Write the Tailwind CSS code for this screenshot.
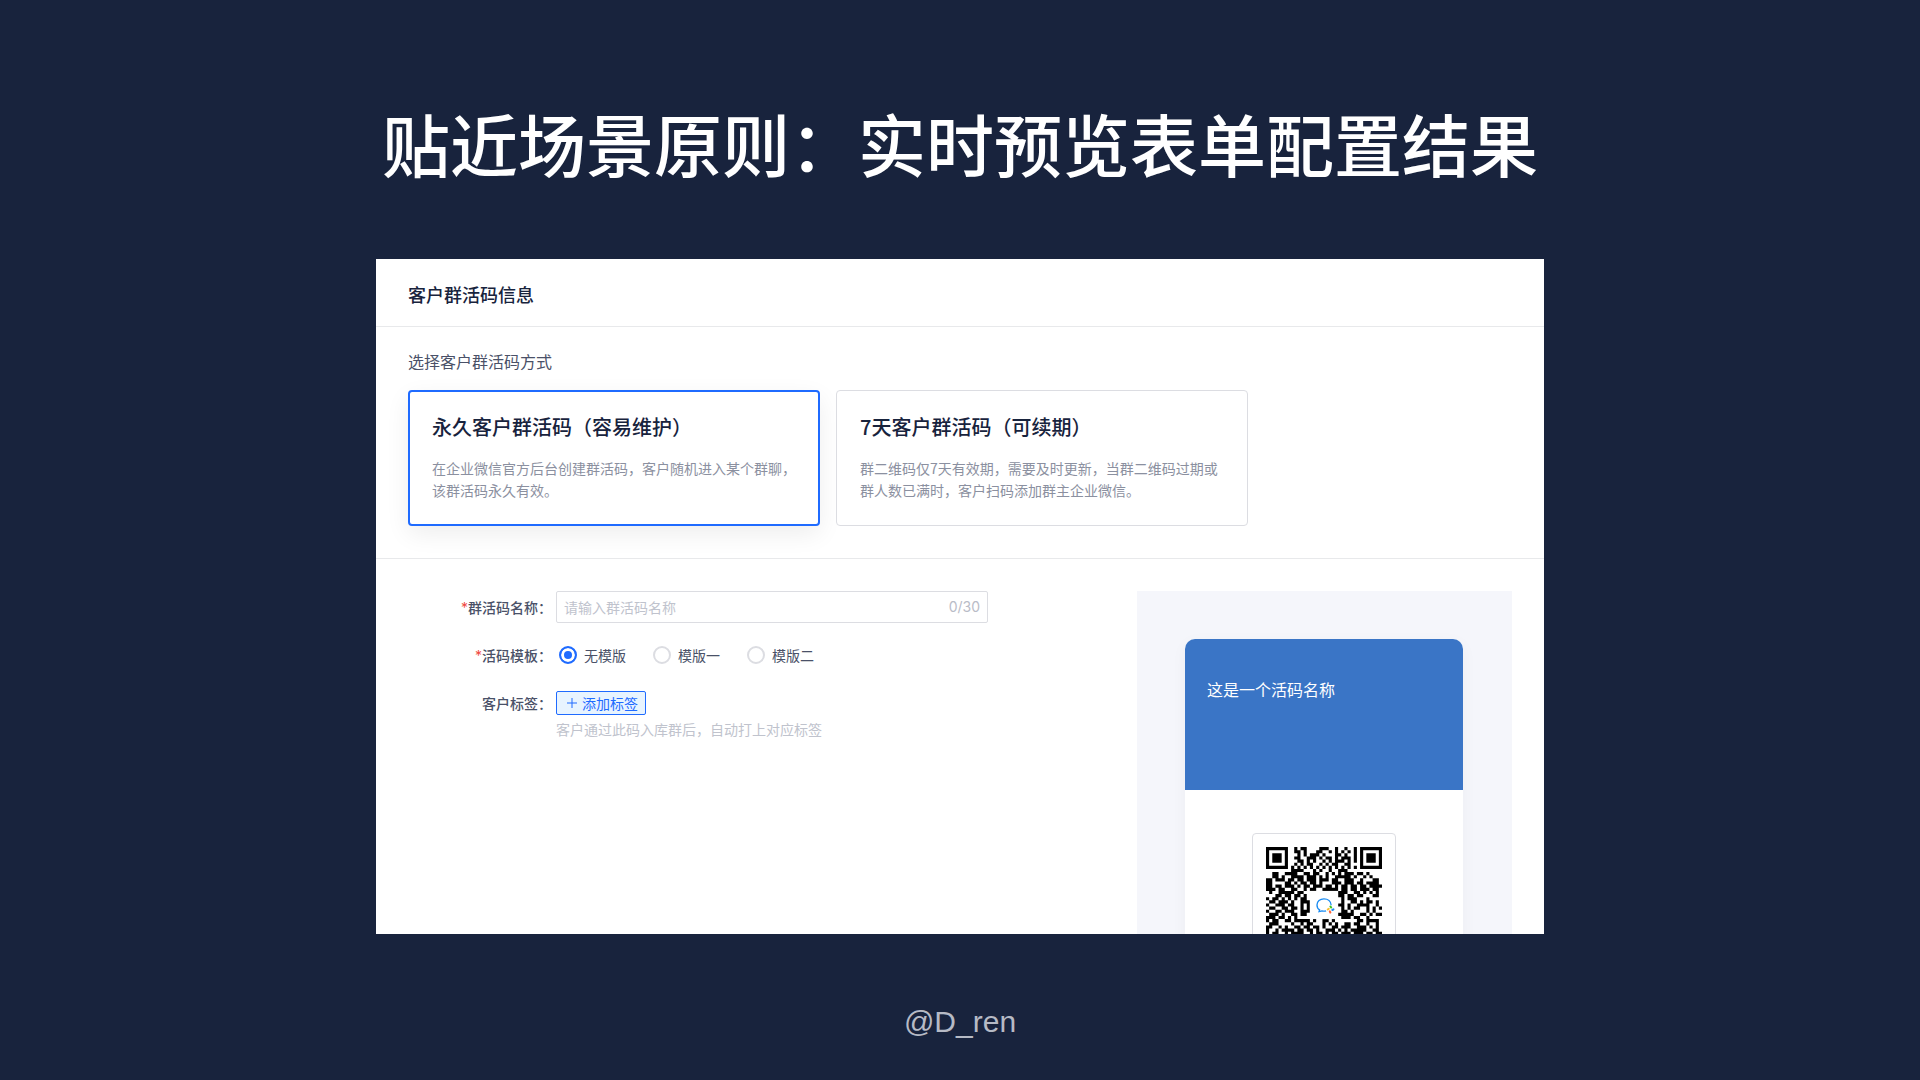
<!DOCTYPE html>
<html lang="zh-CN">
<head>
<meta charset="utf-8">
<meta name="viewport" content="width=device-width, initial-scale=1">
<title>实时预览表单配置结果</title>
<script src="https://cdn.jsdelivr.net/npm/@tailwindcss/browser@4"></script>
</head>
<body class="min-h-screen bg-[#18233d] font-['Noto_Sans_CJK_SC',sans-serif] text-[#4a5168]">
<div class="flex min-h-screen flex-col items-center px-6 pt-[93px]">
  <h1 class="text-center text-[68px] leading-[100px] font-medium text-white">贴近场景原则：实时预览表单配置结果</h1>

  <main class="mt-[66px] h-[675px] w-full max-w-[1168px] overflow-hidden bg-white">
    <header class="border-b border-[#e8e9eb] px-8 pt-[22px] pb-[18px]">
      <h2 class="text-lg leading-[27px] font-medium text-[#18233d]">客户群活码信息</h2>
    </header>

    <section class="border-b border-[#e8e9eb] px-8 pt-[22px] pb-8">
      <h3 class="text-base leading-6">选择客户群活码方式</h3>
      <div class="mt-[17px] flex gap-4">
        <button type="button" class="flex h-[136px] w-[412px] flex-col rounded border-2 border-[#1f6bff] bg-white px-[22px] pt-[19px] text-left shadow-[0_8px_24px_rgba(0,0,0,0.07)]">
          <span class="text-xl leading-8 font-medium text-[#18233d]">永久客户群活码（容易维护）</span>
          <span class="mt-3.5 text-sm leading-[22px] text-[#8b90a0]">在企业微信官方后台创建群活码，客户随机进入某个群聊，该群活码永久有效。</span>
        </button>
        <button type="button" class="flex h-[136px] w-[412px] flex-col rounded border border-[#dcdde2] bg-white px-[23px] pt-5 text-left">
          <span class="text-xl leading-8 font-medium text-[#18233d]">7天客户群活码（可续期）</span>
          <span class="mt-3.5 text-sm leading-[22px] text-[#8b90a0]">群二维码仅7天有效期，需要及时更新，当群二维码过期或群人数已满时，客户扫码添加群主企业微信。</span>
        </button>
      </div>
    </section>

    <div class="flex items-start justify-between px-8 pt-8">
      <form class="flex flex-col gap-4 text-sm">
        <div class="flex items-center">
          <label for="code-name" class="w-36 text-right font-medium"><span class="font-['Inter'] font-normal text-[#f0483e]">*</span>群活码名称：</label>
          <div class="ml-1 flex h-8 w-[432px] items-center rounded-xs border border-[#dcdde2] px-[7px]">
            <input id="code-name" type="text" maxlength="30" placeholder="请输入群活码名称" class="min-w-0 flex-1 outline-none placeholder:text-[#c0c3cd]">
            <span class="font-['Inter'] text-[#b9bcc7]">0/30</span>
          </div>
        </div>

        <div class="flex h-8 items-center" role="radiogroup" aria-labelledby="template-label">
          <span id="template-label" class="w-36 text-right font-medium"><span class="font-['Inter'] font-normal text-[#f0483e]">*</span>活码模板：</span>
          <div class="ml-[7px] flex gap-[27px]">
            <label class="flex items-center gap-[7px]"><input type="radio" name="template" checked class="size-[18px] appearance-none rounded-full border-2 border-[#dcdde2] checked:border-[#1f6bff] checked:bg-[#1f6bff] checked:shadow-[inset_0_0_0_3px_white]">无模版</label>
            <label class="flex items-center gap-[7px]"><input type="radio" name="template" class="size-[18px] appearance-none rounded-full border-2 border-[#dcdde2] checked:border-[#1f6bff] checked:bg-[#1f6bff] checked:shadow-[inset_0_0_0_3px_white]">模版一</label>
            <label class="flex items-center gap-[7px]"><input type="radio" name="template" class="size-[18px] appearance-none rounded-full border-2 border-[#dcdde2] checked:border-[#1f6bff] checked:bg-[#1f6bff] checked:shadow-[inset_0_0_0_3px_white]">模版二</label>
          </div>
        </div>

        <div class="flex items-start">
          <span class="w-36 text-right leading-8 font-medium">客户标签：</span>
          <div class="ml-1 pt-1">
            <button type="button" class="flex h-6 w-[90px] items-center justify-end gap-[5px] rounded-xs border border-[#1f6bff] bg-[#e8f4ff] pr-[7px] text-[#1f6bff]">
              <svg class="size-2.5" viewBox="0 0 10 10" fill="none" stroke="currentColor" aria-hidden="true"><path d="M5 0v10M0 5h10"/></svg>添加标签
            </button>
            <p class="mt-[3px] leading-[22px] text-[#c0c3cd]">客户通过此码入库群后，自动打上对应标签</p>
          </div>
        </div>
      </form>

      <aside class="w-[375px] bg-[#f5f6fb] px-12 pt-12">
        <div class="w-[278px] overflow-hidden rounded-t-[10px] bg-white shadow-[0_4px_16px_rgba(24,35,61,0.04)]">
          <div class="h-[151px] bg-[#3a75c6] px-[22px] pt-[38px]">
            <p class="text-base leading-6 font-normal text-white">这是一个活码名称</p>
          </div>
          <div class="flex h-[300px] items-start justify-center pt-[43px]">
            <div class="rounded border border-[#dcdde2] p-[13px]">
              <svg class="size-[116px]" viewBox="0 0 37 37" role="img" aria-label="群活码二维码">
                <path id="qr" fill="#000"/>
                <path fill="#fff" d="M14 14h9v9h-9z"/>
                <g transform="translate(16 16.2) scale(.33)">
                  <path d="M14.5 7.2C14.3 3.4 11.3 1 7.5 1C3.7 1 .8 3.5 .8 6.9C.8 9.2 1.9 10.8 3.3 11.7L2.8 13.3L5.6 12.7Q7.8 13.2 9.6 12.7" fill="none" stroke="#1b8cf2" stroke-width="1.3"/>
                  <g stroke-width="2" stroke-linecap="round"><path d="M13.8 8.4l.7 1" stroke="#3cc51f"/><path d="M11.2 11.3l1-.7" stroke="#fbc02d"/><path d="M13.7 14.2l-.5-1.1" stroke="#ff6437"/><path d="M16.7 11.2l-1 .6" stroke="#1b8cf2"/></g>
                </g>
              </svg>
            </div>
          </div>
        </div>
      </aside>
    </div>
  </main>

  <footer class="mt-[70px] font-['Liberation_Sans',sans-serif] text-[30px] leading-9 text-[#b6bac5]">@D_ren</footer>
</div>
<script>
  // One string per row of modules; '#' is a dark module
  const rows = [
    '#######..#.##....###..#..#..#.#######',
    '#.....#..##.#...##..#.#.#.#.#.#.....#',
    '#.###.#...#.#.###.#...##.#..#.#.###.#',
    '#.###.#..##..###.#.##.#.###.#.#.###.#',
    '#.###.#...##.#.#..#.#.###.#.#.#.###.#',
    '#.....#..#.#.##..#.#.##..##...#.....#',
    '#######.#.#.#.#.#.#.#.#.#.#.#.#######',
    '........####...#.#..#..###...........',
    '..##..####..##.##..#.#.#.###.##.#....',
    '..##.#..####.###.#.#..#####.#..#.#...',
    '##.###.##.##.###.###.##..###..#...##.',
    '##....##.#.##.##.#...###.###.##.####.',
    '##.##.###.#.##.###.##.#.##.##.##.####',
    '###.##..##..#.##..#####.##.##.###.##.',
    '.#..#####.##...........###..##.#.#.#.',
    '...##.##.##.#..........##.##.##...##.',
    '#.##.#.#.#.##...........#.###...#....',
    '.##.###.#..###..........#..##.#.##.#.',
    '#..###.##..#.#.........##.#..####..#.',
    '.##..##.##.#.#..........#.#.##..#.#.#',
    '#..##.###..###..........##.#....#.#..',
    '.###.#..##.##..........#####..##.#.##',
    '###.##.#.#..............###.##..#....',
    '#.##..##.#####.#..##.#.......##.####.',
    '.###....#..#.##...#.#.#..##.##..#..#.',
    '##..#.#..##.##.##.#..##.###..###.#.#.',
    '#..#.####.##.##.#..###.#.#.#####..##.',
    '#.##..#.####..#.##.#.##.###.###.##.##',
    '.##.##..#.#.##.#..##.#.##.#.#####.#..'
  ];
  document.getElementById('qr').setAttribute('d', rows.map((row, y) =>
    [...row.matchAll(/#+/g)].map(m => `M${m.index} ${y}h${m[0].length}v1h-${m[0].length}z`).join('')
  ).join(''));
</script>
</body>
</html>
